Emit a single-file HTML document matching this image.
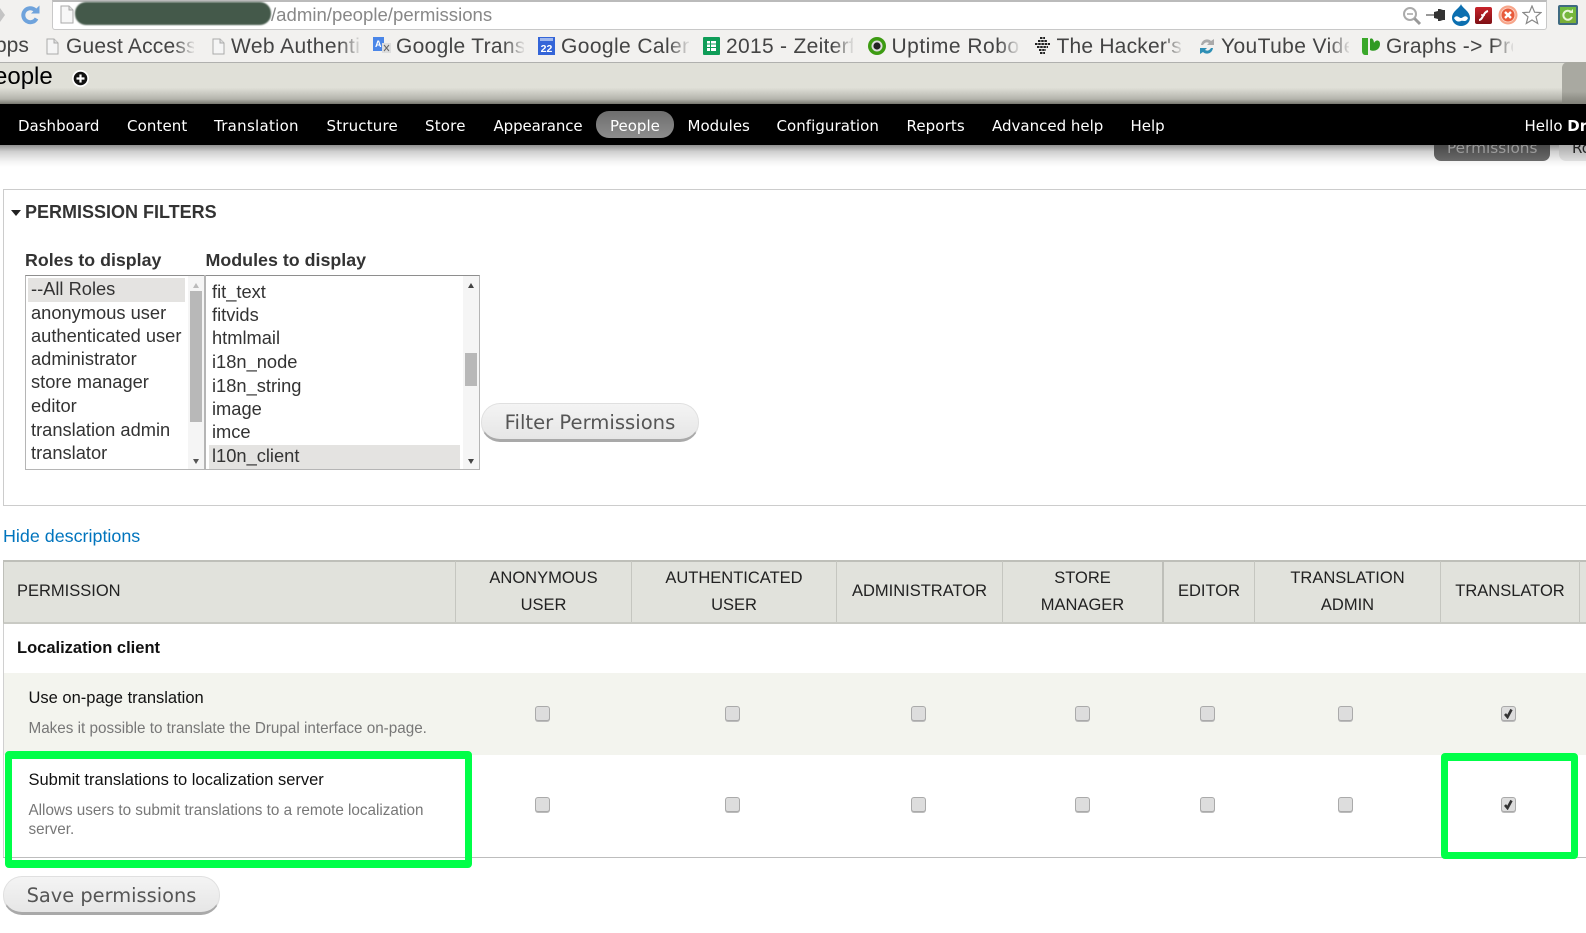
<!DOCTYPE html>
<html><head><meta charset="utf-8"><title>People</title>
<style>
html,body{margin:0;padding:0;background:#fff}
body{width:1586px;height:933px;position:relative;overflow:hidden;font-family:"Liberation Sans",sans-serif}
.a{position:absolute}
.t{position:absolute;white-space:nowrap;line-height:24px;height:24px}
.bm{position:absolute;top:34px;height:28px;line-height:26px;font-size:21px;letter-spacing:.2px;color:#444;white-space:nowrap;overflow:hidden;-webkit-mask-image:linear-gradient(to right,#000 84%,rgba(0,0,0,.1) 100%);mask-image:linear-gradient(to right,#000 84%,rgba(0,0,0,.1) 100%)}
.nav{position:absolute;top:114px;font:15px/24px "DejaVu Sans",sans-serif;color:#fff;white-space:nowrap}
.sel{font-size:18.3px;color:#333}
.th{position:absolute;top:561px;height:61px;border-right:1px solid #c5c6c0;box-sizing:border-box;text-align:center;font-size:16.5px;color:#222;display:flex;align-items:center;justify-content:center;line-height:27px}
.cb{position:absolute;width:15px;height:15px;box-sizing:border-box;border:1px solid #aaa;border-radius:3px;background:#ddd;box-shadow:0 1px 0 #bbb}
.cb svg{position:absolute;left:1px;top:1px}
.btn{position:absolute;box-sizing:border-box;border:1px solid #e0e0e0;border-bottom:3px solid #a9a9a9;background:linear-gradient(#f4f4f4,#e6e6e6);color:#555;font-family:"DejaVu Sans",sans-serif;font-size:19.6px;text-align:center;white-space:nowrap}
.desc{font-size:15.25px;color:#777}
.blk{font-size:16.5px;color:#111}
</style></head><body>

<!-- browser toolbar -->
<div class="a" style="left:0;top:0;width:1586px;height:30px;background:#f2f1ef"></div>
<div class="a" style="left:52px;top:0;width:1495px;height:30px;box-sizing:border-box;background:#fff;border:1px solid #c8c8c8;border-top:2px solid #bbb;border-radius:0 0 3px 3px"></div>
<svg class="a" style="left:0;top:6px" width="6" height="18"><path d="M0 2 L5 9 L0 16Z" fill="#c4c4c4"/></svg>
<svg class="a" style="left:20px;top:4px" width="22" height="22" viewBox="0 0 22 22"><path d="M16.5 14.5 A7 7 0 1 1 15 6" fill="none" stroke="#6fa3dc" stroke-width="4"/><path d="M11 9.5 L19.5 9.5 L19.5 1.5Z" fill="#6fa3dc"/></svg>
<svg class="a" style="left:60px;top:5px" width="14" height="19" viewBox="0 0 14 19"><path d="M1 1H9L13 5V18H1Z" fill="#f7f7f7" stroke="#aaa"/><path d="M9 1V5H13" fill="#ddd" stroke="#aaa"/></svg>
<div class="a" style="left:75px;top:2px;width:196px;height:23px;background:#44594a;border-radius:11px;filter:blur(.8px)"></div>
<div class="t" style="left:271px;top:3px;font-size:18.6px;color:#888">/admin/people/permissions</div>

<!-- toolbar icons -->
<svg class="a" style="left:1402px;top:6px" width="20" height="20" viewBox="0 0 20 20"><circle cx="8" cy="8" r="6" fill="none" stroke="#aaa" stroke-width="2"/><path d="M5 8H11" stroke="#aaa" stroke-width="1.6"/><path d="M12.5 12.5 L18 18" stroke="#999" stroke-width="3"/></svg>
<svg class="a" style="left:1426px;top:7px" width="20" height="16" viewBox="0 0 20 16"><path d="M0 8H10" stroke="#999" stroke-width="2"/><path d="M8 5L12 4V2H14L17 3H19V13H17L14 14H12V12L8 11Z" fill="#333"/></svg>
<svg class="a" style="left:1451px;top:4px" width="20" height="22" viewBox="0 0 20 22"><path d="M10 0 C11 4 19 7 19 14 A9 8 0 0 1 1 14 C1 7 9 4 10 0Z" fill="#0c6fb0"/><path d="M3 14 C6 10 8 14 10 14 C12 14 14 10 17 14 C15 19 12 16 10 17 C8 18 5 18 3 14Z" fill="#fff"/></svg>
<div class="a" style="left:1475px;top:7px;width:17px;height:17px;background:linear-gradient(#c8232a,#7e1015);border-radius:2px"></div>
<svg class="a" style="left:1475px;top:7px" width="17" height="17" viewBox="0 0 17 17"><path d="M4 13 C8 13 8 5 13 4" fill="none" stroke="#fff" stroke-width="2"/><path d="M6 8H10" stroke="#fff" stroke-width="1.5"/></svg>
<svg class="a" style="left:1498px;top:5px" width="20" height="20" viewBox="0 0 20 20"><circle cx="10" cy="10" r="9.5" fill="#f7a58a"/><circle cx="10" cy="10" r="7.4" fill="#fff" opacity=".5"/><circle cx="10" cy="10" r="6.5" fill="#e85a3a"/><path d="M7 7L13 13M13 7L7 13" stroke="#fff" stroke-width="2.4"/></svg>
<svg class="a" style="left:1522px;top:5px" width="20" height="20" viewBox="0 0 20 20"><path d="M10 1 L12.6 7.2 L19 7.6 L14 11.8 L15.7 18.5 L10 15 L4.3 18.5 L6 11.8 L1 7.6 L7.4 7.2Z" fill="#fff" stroke="#888" stroke-width="1.2"/></svg>
<div class="a" style="left:1558px;top:5px;width:20px;height:20px;box-sizing:border-box;background:linear-gradient(#6fbd3f,#7bae38);border:2px solid #3f6a80;border-radius:2px"></div>
<svg class="a" style="left:1561px;top:8px" width="14" height="14" viewBox="0 0 14 14"><path d="M11 9 A4.5 4.5 0 1 1 10 4" fill="none" stroke="#e8f5d8" stroke-width="2"/><path d="M8 5H12V1Z" fill="#e8f5d8"/></svg>

<!-- bookmarks -->
<div class="a" style="left:0;top:30px;width:1586px;height:32px;background:#f2f1ef;border-bottom:1px solid #b0b0ae"></div>
<div class="t" style="left:-19px;top:34px;font-size:21px;color:#444">Apps</div>
<svg class="a" style="left:46px;top:38px" width="13" height="17" viewBox="0 0 13 17"><path d="M1 1H8L12 5V16H1Z" fill="#f5f5f5" stroke="#aaa"/><path d="M8 1V5H12" fill="#ddd" stroke="#aaa"/></svg>
<div class="bm" style="left:66px;width:128px">Guest Access</div>
<svg class="a" style="left:212px;top:38px" width="13" height="17" viewBox="0 0 13 17"><path d="M1 1H8L12 5V16H1Z" fill="#f5f5f5" stroke="#aaa"/><path d="M8 1V5H12" fill="#ddd" stroke="#aaa"/></svg>
<div class="bm" style="left:231px;width:129px;letter-spacing:.4px">Web Authentication</div>
<svg class="a" style="left:373px;top:37px" width="18" height="18" viewBox="0 0 18 18"><path d="M0 0H11V14H0Z" fill="#4a86e8"/><path d="M9 6H18V16H9Z" fill="#ddd"/><text x="2" y="10" font-size="9" fill="#fff" font-family="Liberation Sans,sans-serif" font-weight="bold">A</text><path d="M11 8L16 14M16 8L11 14" stroke="#666"/></svg>
<div class="bm" style="left:396px;width:128px;letter-spacing:.3px">Google Translate</div>
<svg class="a" style="left:538px;top:37px" width="17" height="18" viewBox="0 0 17 18"><rect width="17" height="18" fill="#3465d8"/><rect x="2" y="1" width="13" height="3" fill="#9fb8ee"/><text x="8.5" y="15" font-size="10.5" text-anchor="middle" fill="#fff" font-family="Liberation Sans,sans-serif" font-weight="bold">22</text></svg>
<div class="bm" style="left:561px;width:128px;letter-spacing:.4px">Google Calendar</div>
<svg class="a" style="left:703px;top:37px" width="17" height="18" viewBox="0 0 17 18"><rect width="17" height="18" rx="1" fill="#0f9d58"/><path d="M4 4H13V14H4Z" fill="#fff"/><path d="M4 7H13M4 10.5H13M7.5 4V14" stroke="#0f9d58"/></svg>
<div class="bm" style="left:726px;width:127px;letter-spacing:.3px">2015 - Zeiterfassung</div>
<svg class="a" style="left:868px;top:37px" width="18" height="18" viewBox="0 0 18 18"><circle cx="9" cy="9" r="9" fill="#3d9b12"/><circle cx="9" cy="9" r="5.5" fill="#ddd"/><circle cx="9" cy="9" r="3.6" fill="#222"/></svg>
<div class="bm" style="left:891.5px;width:127px;letter-spacing:.5px">Uptime Robot</div>
<svg class="a" style="left:1034px;top:37px" width="17" height="18" viewBox="0 0 17 18"><path d="M6 1H11M4 4H13M1 7H16M3 10H14M5 13H12M6 16H11" stroke="#222" stroke-width="2" stroke-dasharray="2.5 .7"/></svg>
<div class="bm" style="left:1056.5px;width:125px">The Hacker's</div>
<svg class="a" style="left:1199px;top:38px" width="16" height="17" viewBox="0 0 16 17"><path d="M2 7 C3 1 9 0 12 3 L15 1 V7 H8 L10 5 C8 4 6 4 4 7Z" fill="#aaa"/><path d="M14 10 C13 16 7 17 4 14 L1 16 V10 H8 L6 12 C8 13 10 13 12 10Z" fill="#2e8fb5"/></svg>
<div class="bm" style="left:1221px;width:128px;letter-spacing:.4px">YouTube Video</div>
<svg class="a" style="left:1362px;top:37px" width="18" height="18" viewBox="0 0 18 18"><path d="M0 1H6V18H3C1 18 0 16 0 14Z" fill="#3aa82a"/><path d="M8 2 C10 0 12 3 12 6 C13 3 18 2 18 7 C18 13 12 15 8 13Z" fill="#2f9a22"/></svg>
<div class="bm" style="left:1386px;width:127px;letter-spacing:.3px">Graphs -&gt; Presets</div>

<!-- admin header -->
<div class="a" style="left:0;top:63px;width:1586px;height:41px;background:linear-gradient(#e0e0d8 0,#e0e0d8 60%,#b4b4ac 88%,#77776f 100%)"></div>
<div class="a" style="left:1562px;top:62px;width:24px;height:42px;background:linear-gradient(#a9a9a1 0,#a9a9a1 70%,#808078 100%);border-radius:6px 0 0 0"></div>
<div class="t" style="left:-22px;top:65px;font-size:24px;color:#000">People</div>
<svg class="a" style="left:72px;top:70px" width="17" height="17" viewBox="0 0 17 17"><circle cx="8.5" cy="8.5" r="8.5" fill="#fff"/><circle cx="8.5" cy="8.5" r="6.8" fill="#111"/><path d="M8.5 4.5V12.5M4.5 8.5H12.5" stroke="#fff" stroke-width="2.2"/></svg>

<!-- shadow under nav + tabs -->
<div class="a" style="left:0;top:145px;width:1586px;height:22px;background:linear-gradient(#8f8f8f,#cfcfcf 30%,#f4f4f4 75%,#fff)"></div>
<div class="a" style="left:1434px;top:140px;width:116px;height:21px;background:linear-gradient(#3d3d3d,#6a6a6a);border-radius:0 0 7px 7px"></div>
<div class="t" style="left:1447px;top:136px;font:15.3px/24px 'DejaVu Sans',sans-serif;color:#9a9a9a">Permissions</div>
<div class="a" style="left:1559px;top:140px;width:27px;height:21px;background:linear-gradient(#999,#dedede);border-radius:0 0 0 7px"></div>
<div class="t" style="left:1572px;top:136px;font:15px/24px 'DejaVu Sans',sans-serif;color:#222">Roles</div>

<!-- nav -->
<div class="a" style="left:0;top:104px;width:1586px;height:41px;background:#000"></div>
<div class="a" style="left:596px;top:111px;width:78px;height:27px;border-radius:13px;background:linear-gradient(#6e6e6e,#8d8d8d)"></div>
<div class="nav" style="left:18px">Dashboard</div>
<div class="nav" style="left:127px;letter-spacing:.1px">Content</div>
<div class="nav" style="left:214px;letter-spacing:.28px">Translation</div>
<div class="nav" style="left:326.5px;letter-spacing:.18px">Structure</div>
<div class="nav" style="left:425px;letter-spacing:.2px">Store</div>
<div class="nav" style="left:493.5px;letter-spacing:-.1px">Appearance</div>
<div class="nav" style="left:610px">People</div>
<div class="nav" style="left:687.5px">Modules</div>
<div class="nav" style="left:776.5px;letter-spacing:.05px">Configuration</div>
<div class="nav" style="left:906.5px;letter-spacing:.1px">Reports</div>
<div class="nav" style="left:992px">Advanced help</div>
<div class="nav" style="left:1130.5px">Help</div>
<div class="nav" style="left:1524.5px">Hello <b>Drupal</b></div>

<!-- fieldset -->
<div class="a" style="left:3px;top:189px;width:1600px;height:317px;box-sizing:border-box;border:1px solid #ccc"></div>
<svg class="a" style="left:11px;top:210px" width="10" height="6"><path d="M0 0H10L5 6Z" fill="#222"/></svg>
<div class="t" style="left:25px;top:200px;font-size:18px;font-weight:bold;color:#333">PERMISSION FILTERS</div>
<div class="t" style="left:25px;top:248px;font-size:17.8px;font-weight:bold;color:#333">Roles to display</div>
<div class="t" style="left:205.5px;top:248px;font-size:17.85px;font-weight:bold;color:#333">Modules to display</div>

<!-- selects -->
<div class="a" style="left:25px;top:275px;width:455px;height:195px;box-sizing:border-box;border:1px solid #b5b5b5;border-top-color:#8e8e8e;background:#fff"></div>
<div class="a" style="left:204px;top:275px;width:2px;height:195px;background:#b5b5b5"></div>
<div class="a" style="left:28px;top:278px;width:157px;height:24px;background:#e4e3e1"></div>
<div class="a" style="left:188px;top:276px;width:16px;height:193px;background:#f5f5f5"></div>
<div class="a" style="left:190px;top:291px;width:12px;height:131px;background:#b8b8b8"></div>
<svg class="a" style="left:193px;top:283px" width="6" height="5"><path d="M0 5H6L3 0Z" fill="#bbb"/></svg>
<svg class="a" style="left:193px;top:459px" width="6" height="5"><path d="M0 0H6L3 5Z" fill="#555"/></svg>
<div class="t sel" style="left:31px;top:277px">--All Roles</div>
<div class="t sel" style="left:31px;top:301px">anonymous user</div>
<div class="t sel" style="left:31px;top:324px">authenticated user</div>
<div class="t sel" style="left:31px;top:347px">administrator</div>
<div class="t sel" style="left:31px;top:370px">store manager</div>
<div class="t sel" style="left:31px;top:394px">editor</div>
<div class="t sel" style="left:31px;top:418px">translation admin</div>
<div class="t sel" style="left:31px;top:441px">translator</div>

<div class="a" style="left:209px;top:445px;width:251px;height:24px;background:#e4e3e1"></div>
<div class="a" style="left:463px;top:276px;width:16px;height:193px;background:#f5f5f5"></div>
<div class="a" style="left:465px;top:353px;width:12px;height:33px;background:#b8b8b8"></div>
<svg class="a" style="left:468px;top:283px" width="6" height="5"><path d="M0 5H6L3 0Z" fill="#444"/></svg>
<svg class="a" style="left:468px;top:459px" width="6" height="5"><path d="M0 0H6L3 5Z" fill="#444"/></svg>
<div class="t sel" style="left:212px;top:280px">fit_text</div>
<div class="t sel" style="left:212px;top:303px">fitvids</div>
<div class="t sel" style="left:212px;top:326px">htmlmail</div>
<div class="t sel" style="left:212px;top:350px">i18n_node</div>
<div class="t sel" style="left:212px;top:374px">i18n_string</div>
<div class="t sel" style="left:212px;top:397px">image</div>
<div class="t sel" style="left:212px;top:420px">imce</div>
<div class="t sel" style="left:212px;top:444px">l10n_client</div>

<div class="btn" style="left:481px;top:403px;width:218px;height:39px;border-radius:19px;line-height:37px">Filter Permissions</div>

<div class="t" style="left:3px;top:524px;font-size:17.9px;color:#0074bd">Hide descriptions</div>

<!-- table -->
<div class="a" style="left:3px;top:560px;width:1583px;height:64px;box-sizing:border-box;background:#e1e2dc;border-top:2px solid #bebfb9;border-bottom:2px solid #c9cac4;border-left:1px solid #bebfb9"></div>
<div class="th" style="left:4px;width:452px;justify-content:flex-start;padding-left:13px">PERMISSION</div>
<div class="th" style="left:456px;width:176px">ANONYMOUS<br>USER</div>
<div class="th" style="left:632px;width:205px">AUTHENTICATED<br>USER</div>
<div class="th" style="left:837px;width:166px">ADMINISTRATOR</div>
<div class="th" style="left:1003px;width:161px;border-right:2px solid #bebfb9">STORE<br>MANAGER</div>
<div class="th" style="left:1164px;width:91px">EDITOR</div>
<div class="th" style="left:1255px;width:186px">TRANSLATION<br>ADMIN</div>
<div class="th" style="left:1441px;width:139px">TRANSLATOR</div>

<div class="a" style="left:3px;top:624px;width:1px;height:233px;background:#d0d0d0"></div>
<div class="t" style="left:17px;top:636px;font-size:16.5px;font-weight:bold;color:#111">Localization client</div>
<div class="a" style="left:4px;top:673px;width:1582px;height:82px;background:#f3f4ee"></div>
<div class="t blk" style="left:28.5px;top:686px">Use on-page translation</div>
<div class="t desc" style="left:28.5px;top:717px">Makes it possible to translate the Drupal interface on-page.</div>
<div class="t blk" style="left:28.5px;top:768px">Submit translations to localization server</div>
<div class="t desc" style="left:28.5px;top:799px">Allows users to submit translations to a remote localization</div>
<div class="t desc" style="left:28.5px;top:818px">server.</div>
<div class="a" style="left:3px;top:857px;width:1583px;height:1px;background:#bdbdbd"></div>

<!-- checkboxes row 1 -->
<div class="cb" style="left:535px;top:706px"></div>
<div class="cb" style="left:725px;top:706px"></div>
<div class="cb" style="left:910.5px;top:706px"></div>
<div class="cb" style="left:1074.5px;top:706px"></div>
<div class="cb" style="left:1199.5px;top:706px"></div>
<div class="cb" style="left:1338px;top:706px"></div>
<div class="cb" style="left:1501px;top:706px"><svg width="11" height="11" viewBox="0 0 11 11"><path d="M2 6 L4.5 9 L8.5 1.5" fill="none" stroke="#333" stroke-width="2.6"/></svg></div>
<!-- checkboxes row 2 -->
<div class="cb" style="left:535px;top:797px"></div>
<div class="cb" style="left:725px;top:797px"></div>
<div class="cb" style="left:910.5px;top:797px"></div>
<div class="cb" style="left:1074.5px;top:797px"></div>
<div class="cb" style="left:1199.5px;top:797px"></div>
<div class="cb" style="left:1338px;top:797px"></div>
<div class="cb" style="left:1501px;top:797px"><svg width="11" height="11" viewBox="0 0 11 11"><path d="M2 6 L4.5 9 L8.5 1.5" fill="none" stroke="#333" stroke-width="2.6"/></svg></div>

<!-- green highlights -->
<div class="a" style="left:5px;top:751px;width:467px;height:117px;box-sizing:border-box;border:7px solid #00ff48;border-top-width:8px;border-bottom-width:8px;border-radius:4px"></div>
<div class="a" style="left:1440.5px;top:753px;width:137.5px;height:106px;box-sizing:border-box;border:7px solid #00ff48;border-top-width:8px;border-radius:4px"></div>

<div class="btn" style="left:3px;top:876px;width:217px;height:39px;border-radius:19px;line-height:37px;font-size:19.4px">Save permissions</div>
</body></html>
